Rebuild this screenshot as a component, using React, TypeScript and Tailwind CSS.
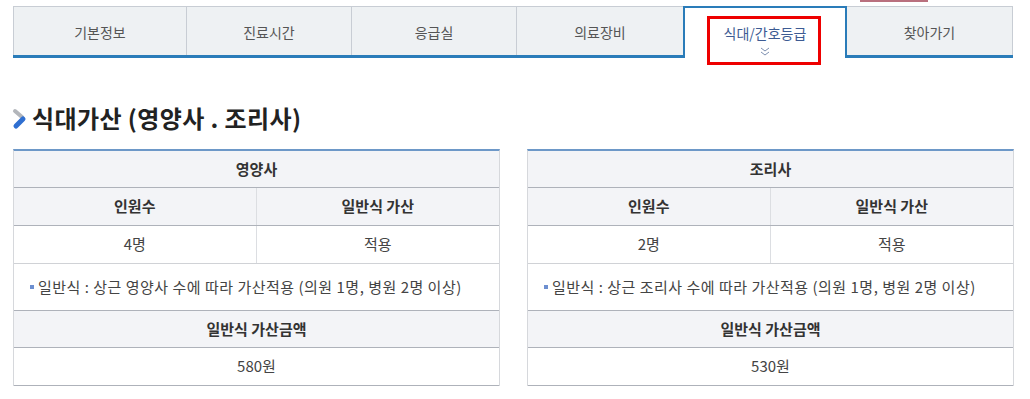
import React from "react";

const tabs = ["기본정보", "진료시간", "응급실", "의료장비", "식대/간호등급", "찾아가기"];
const tabW = ["w-[174px]", "w-[165px]", "w-[165px]", "w-[166px]", "w-[164px]", "w-[166px]"];

type Staff = { title: string; count: string; apply: string; note: string; amount: string };

const staff: Staff[] = [
  { title: "영양사", count: "4명", apply: "적용", note: "일반식 : 상근 영양사 수에 따라 가산적용 (의원 1명, 병원 2명 이상)", amount: "580원" },
  { title: "조리사", count: "2명", apply: "적용", note: "일반식 : 상근 조리사 수에 따라 가산적용 (의원 1명, 병원 2명 이상)", amount: "530원" },
];

function TitleIcon() {
  return (
    <svg width="18" height="24" viewBox="0 0 18 24" className="shrink-0">
      <line x1="4" y1="5" x2="11" y2="11" stroke="#b3b6bb" strokeWidth="4" strokeLinecap="round" />
      <line x1="12" y1="13" x2="5" y2="20" stroke="#2f6fd1" strokeWidth="5" strokeLinecap="round" />
    </svg>
  );
}

function StaffTable({ s }: { s: Staff }) {
  const cell = "h-[37px] flex items-center justify-center";
  return (
    <div className="flex-1 border-t-2 border-t-[#6d98c8] border-x border-x-[#d6d8dc] text-[15px]">
      <div className={`${cell} bg-[#f3f4f7] font-semibold text-[#333] border-b border-[#aeb2ba]`}>{s.title}</div>
      <div className="grid grid-cols-2 bg-[#f3f4f7] font-semibold text-[#333] border-b border-[#aeb2ba]">
        <div className={`${cell} border-r border-[#dcdee2]`}>인원수</div>
        <div className={cell}>일반식 가산</div>
      </div>
      <div className="grid grid-cols-2 bg-white text-[#444] border-b border-[#d0d2d6]">
        <div className={`${cell} border-r border-[#dcdee2]`}>{s.count}</div>
        <div className={cell}>{s.apply}</div>
      </div>
      <div className="h-[47px] flex items-center px-[16px] bg-white text-[#444] tracking-[0.5px] border-b border-[#aeb2ba]">
        <span className="w-[4px] h-[4px] bg-[#6d8fd0] mr-[4px] shrink-0" />
        {s.note}
      </div>
      <div className={`${cell} bg-[#f3f4f7] font-semibold text-[#333] border-b border-[#aeb2ba]`}>일반식 가산금액</div>
      <div className={`${cell} h-[38px] bg-white text-[#444] border-b border-[#aeb2ba]`}>{s.amount}</div>
    </div>
  );
}

export default function App() {
  return (
    <div className="w-[1030px] h-[399px] bg-white overflow-hidden relative" style={{ fontFamily: '"Noto Sans CJK KR", "Noto Sans", sans-serif' }}>
      {/* bit of a button peeking from above */}
      <div className="absolute left-[860px] top-0 w-[68px] h-[2px] bg-[#b9707e]" />

      {/* tabs */}
      <div className="ml-[13px] mt-[6px] w-[1000px] flex border-b-[3px] border-[#2a7cb9] h-[52px]">
        {tabs.map((t, i) => {
          const active = i === 4;
          if (active)
            return (
              <div key={t} className={`${tabW[i]} relative -mb-[3px] bg-white border-2 border-b-0 border-[#2a7cb9] flex flex-col items-center pt-[15px] text-[14px] text-[#3d5b93]`}>
                <span className="leading-[20px]">{t}</span>
                <svg width="10" height="9" viewBox="0 0 10 9" className="mt-[4px]">
                  <path d="M1 1 L5 4 L9 1 M1 5 L5 8 L9 5" fill="none" stroke="#7d8fb0" strokeWidth="1" />
                </svg>
                <div className="absolute left-[22px] top-[8px] w-[114px] h-[49px] border-[3px] border-[#ee0000]" />
              </div>
            );
          return (
            <div key={t} className={`${tabW[i]} bg-[#eef1f3] border-t border-t-[#c8cdd4] ${i === 0 ? "border-l" : ""} ${i === 5 ? "border-r" : ""} ${i !== 3 && i !== 5 ? "border-r" : ""} border-[#c8cdd4] flex items-center justify-center pt-[2px] text-[14px] text-[#555]`}>
              {t}
            </div>
          );
        })}
      </div>

      {/* heading */}
      <div className="flex items-center ml-[11px] mt-[45px] h-[30px] gap-[3px]">
        <TitleIcon />
        <h2 className="text-[24px] font-bold text-[#222] leading-[30px] tracking-[0.4px]">식대가산 (영양사 . 조리사)</h2>
      </div>

      {/* tables */}
      <div className="flex gap-[27px] ml-[13px] w-[1001px] mt-[16px]">
        {staff.map((s) => (
          <StaffTable key={s.title} s={s} />
        ))}
      </div>
    </div>
  );
}
